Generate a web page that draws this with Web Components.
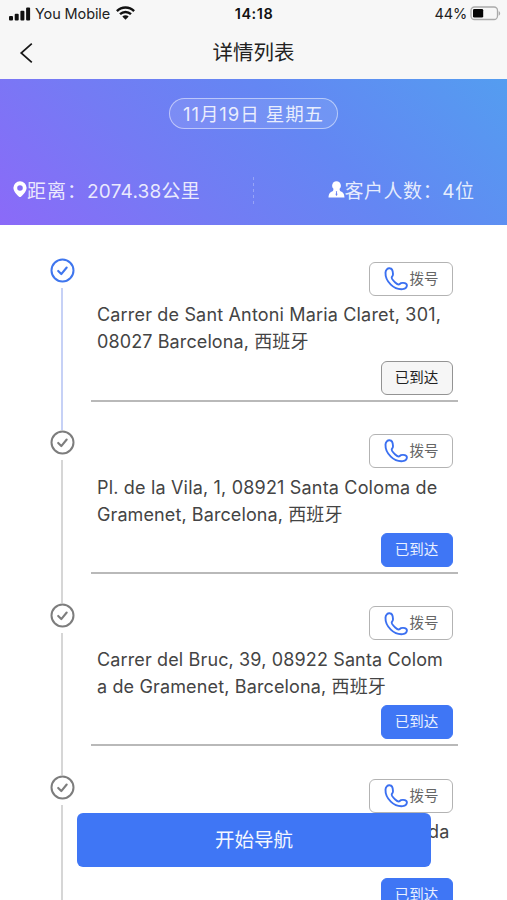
<!DOCTYPE html>
<html lang="zh-CN">
<head>
<meta charset="utf-8">
<title>详情列表</title>
<style>
html,body{margin:0;height:900px;overflow:hidden;background:#fff}
body{font-family:Inter,"Noto Sans CJK SC",sans-serif;color:#444}
</style>
</head>
<body>
<route-page></route-page>
<script>
const define = (name, html, ready) => customElements.define(name, class extends HTMLElement {
  connectedCallback() {
    if (this.shadowRoot) return;
    const root = this.attachShadow({ mode: 'open' });
    root.innerHTML = html;
    if (ready) ready(this, root);
  }
});

// Single line of text whose tracking is set so that it spans the given width.
define('fit-text', `<style>:host{display:block;white-space:pre}span{display:inline-block}</style><span><slot></slot></span>`, (el, root) => {
  const span = root.querySelector('span');
  const width = +el.getAttribute('width');
  const n = [...el.textContent].length;
  const natural = span.getBoundingClientRect().width;
  if (width) span.style.letterSpacing = (width - natural) / n + 'px';
});

define('status-bar', `<style>
:host{display:grid;grid-template-columns:1fr auto 1fr;align-items:center;height:28px;padding:0 6px 0 9px;background:#f7f7f7;color:#222;font-size:14.5px;line-height:28px}
div{display:flex;align-items:center}
.right{justify-content:flex-end;gap:3px}
b{font-weight:600;color:#111;margin-right:2px}
svg{display:block}
.name{margin:0 6px 0 4px}
</style>
<div><svg width="22" height="14" viewBox="0 0 22 14" fill="#111"><rect x="0" y="9" width="4" height="4.5" rx="1"/><rect x="5.7" y="6.7" width="4" height="6.8" rx="1"/><rect x="11.4" y="3.7" width="4" height="9.8" rx="1"/><rect x="17.1" y="0.5" width="4" height="13" rx="1"/></svg>
<fit-text class="name" width="75">You Mobile</fit-text>
<svg width="19" height="14" viewBox="0 0 19 14" fill="none" stroke="#111" stroke-width="2.4" style="margin-top:-2px"><path d="M.9 5.1C5.8.3 13.2.3 18.1 5.1M4 8.2c3.2-3 7.8-3 11 0"/><path d="M6.3 10.4c1.9-1.7 4.5-1.7 6.4 0l-3.2 3.3z" fill="#111" stroke="none"/></svg></div>
<b><fit-text width="38.5">14:18</fit-text></b>
<div class="right"><fit-text width="32.5">44%</fit-text><svg width="31" height="15" viewBox="0 0 31 15" style="margin-top:-2px"><rect x="1" y="1" width="26.5" height="12.5" rx="3.5" fill="none" stroke="#aaa" stroke-width="1.3"/><rect x="3" y="3" width="10.2" height="8.500" rx="1.3" fill="#050505"/><path d="M28.7 5c2 1 2 3.800 0 4.800z" fill="#aaa"/></svg></div>`);

define('nav-bar', `<style>
:host{display:grid;grid-template-columns:40px 1fr 40px;align-items:center;height:51px;background:#f7f7f7;color:#222;font-size:20.5px;line-height:48px;text-align:center}
svg{display:block;margin:-1px 0 0 19px}
fit-text{margin-top:-2px}
</style><svg width="16" height="22" viewBox="0 0 16 22" fill="none" stroke="#171717" stroke-width="1.7"><path d="M12.800 1.700 2.200 11 12.800 20.300"/></svg><fit-text><slot></slot></fit-text>`);

define('trip-summary', `<style>
:host{display:flex;flex-direction:column;align-items:center;height:145.500px;box-sizing:border-box;padding-top:19px;background:linear-gradient(45deg,#8b6af8 0%,#747bf4 33%,#6387f3 62%,#549df0 100%);color:rgba(255,255,255,.85)}
.date{box-sizing:border-box;width:169px;height:31px;border:1.500px solid rgba(255,255,255,.5);border-radius:16px;background:rgba(255,255,255,.1);display:flex;justify-content:center;font-size:18.5px;line-height:30px}
.stats{display:grid;grid-template-columns:1fr 2px 1fr;width:100%;align-items:center;height:34px;margin-top:44px;font-size:19px;line-height:34px}
.stat{display:flex;align-items:center}
.stat fit-text{padding-top:2px;margin-bottom:-1px}
.first{padding-left:13px}
.last{padding-left:73px}
i{height:28px;background:repeating-linear-gradient(rgba(255,255,255,.28) 0 3px,transparent 3px 6px);width:1.5px}
svg{display:block;flex:none;margin-top:-2px}
</style>
<div class="date"><fit-text width="141">11月19日 星期五</fit-text></div>
<div class="stats"><div class="stat first"><svg width="14" height="17" viewBox="0 0 14 17"><path fill="#fff" fill-rule="evenodd" d="M7 .2a6.600 6.600 0 0 0-6.600 6.600c0 3.500 3.200 6.700 5.400 8.700q1.200 1 2.400 0c2.200-2 5.400-5.200 5.400-8.700A6.600 6.600 0 0 0 7 .2m0 4a2.800 2.800 0 1 1 0 5.600 2.800 2.800 0 0 1 0-5.600"/></svg><fit-text width="60">距离：</fit-text><fit-text width="113">2074.38公里</fit-text></div><i></i>
<div class="stat last"><svg width="17" height="17" viewBox="0 0 17 17"><circle cx="8.500" cy="4.700" r="4.400" fill="#fff"/><path fill="#fff" d="M5.500 8h6l.5 2c3 1 4.300 2.600 4.500 6.500H.5C.7 12.600 2 11 5 10z"/><path fill="#6b82f4" d="M7.800 10.200h1.400l-.3 1.100.5 2.500-.9 1.200-.9-1.200.5-2.500z"/></svg><fit-text width="130">客户人数：4位</fit-text></div></div>`);

define('call-button', `<style>
:host{display:flex;align-items:center;justify-content:center;box-sizing:border-box;width:84px;height:34px;border:1.500px solid #b3b3b3;border-radius:6px;background:#fff;color:#666;font-size:14.500px;line-height:31px;padding-left:1px}
svg{display:block;margin-right:2px;margin-top:1px}fit-text{margin-top:-1px}
</style><svg width="24" height="24" viewBox="0 0 24 24" fill="none" stroke="#3b70f1" stroke-width="1.900" stroke-linejoin="round" stroke-linecap="round"><path d="M5.800 1.300C3.500 1 1.600 2.900 1.500 5.600c-.2 4.200 1.700 8.500 5.300 12 3.700 3.500 8.200 4.900 12 4.500 2.500-.3 4.100-2 4.100-3.800 0-1.600-1.100-2.300-3.700-2.400-1.700-.1-2.600.1-3.500 1.100-.8.800-2.600.2-4.500-1.500-2.300-2.100-3.900-4.500-3.400-5.500.4-.9 1.300-1 1.200-2.900-.1-3.300-1-5.600-3.200-5.800z"/></svg><fit-text width="29">拨号</fit-text>`);

define('arrive-button', `<style>
:host{display:flex;justify-content:center;box-sizing:border-box;width:72px;height:34px;border:1.500px solid #3f76f5;border-radius:6px;background:#3f76f5;color:#e9f0ff;font-size:14.500px;line-height:31px}
:host([plain]){border-color:#939393;background:#f6f6f6;color:#222}
</style><fit-text width="43.5">已到达</fit-text>`);

define('route-stop', `<style>
:host{display:flex;height:172.300px;--ring:#7d7d7d;--rail:#d6d6d6}
:host([active]){--ring:#3f76ee;--rail:#c6d1f6}
.rail{display:flex;flex-direction:column;align-items:center;width:24px;margin:0 17px 0 50px}
svg{display:block;flex:none}
.line{flex:1;width:2px;margin-top:5px;background:var(--rail)}
.body{box-sizing:border-box;width:367px;height:143.500px;border-bottom:2px solid #b9b9b9;padding:3.500px 5.500px 0 6px;display:flex;flex-direction:column}
call-button,arrive-button{align-self:flex-end;flex:none}
.address{height:54px;margin:5.800px 0 5.200px;font-size:18px;line-height:27px}
</style>
<div class="rail"><svg width="25" height="25" viewBox="0 0 25 25" fill="none" stroke="var(--ring)"><circle cx="12.500" cy="12.500" r="11" stroke-width="2"/><path d="m8.200 12.900 3.100 3.200 5.400-6.600" stroke-width="2.100" stroke-linecap="round" stroke-linejoin="round"/></svg><div class="line"></div></div>
<div class="body"><call-button></call-button><div class="address"><slot></slot></div><arrive-button></arrive-button></div>`, (el, root) => {
  if (el.hasAttribute('active')) root.querySelector('arrive-button').setAttribute('plain', '');
});

define('start-button', `<style>
:host{position:absolute;left:77px;top:813px;width:354px;height:54px;border-radius:6px;background:#3f76f5;color:#f3f7ff;display:flex;justify-content:center;font-size:19.500px;line-height:54px}
</style><fit-text width="78"><slot></slot></fit-text>`);

define('route-page', `<style>
:host{display:block;position:relative;width:507px;height:900px;overflow:hidden;background:#fff}
main{padding-top:33.700px}
.tail{padding-left:331px}
</style>
<status-bar></status-bar><nav-bar>详情列表</nav-bar><trip-summary></trip-summary>
<main>
<route-stop active><fit-text width="344">Carrer de Sant Antoni Maria Claret, 301,</fit-text><fit-text width="211.5">08027 Barcelona, 西班牙</fit-text></route-stop>
<route-stop><fit-text width="340.5">Pl. de la Vila, 1, 08921 Santa Coloma de</fit-text><fit-text width="245.5">Gramenet, Barcelona, 西班牙</fit-text></route-stop>
<route-stop><fit-text width="346">Carrer del Bruc, 39, 08922 Santa Colom</fit-text><fit-text width="289">a de Gramenet, Barcelona, 西班牙</fit-text></route-stop>
<route-stop><fit-text class="tail" width="21.5">da</fit-text></route-stop>
</main>
<start-button>开始导航</start-button>`);
</script>
</body>
</html>
